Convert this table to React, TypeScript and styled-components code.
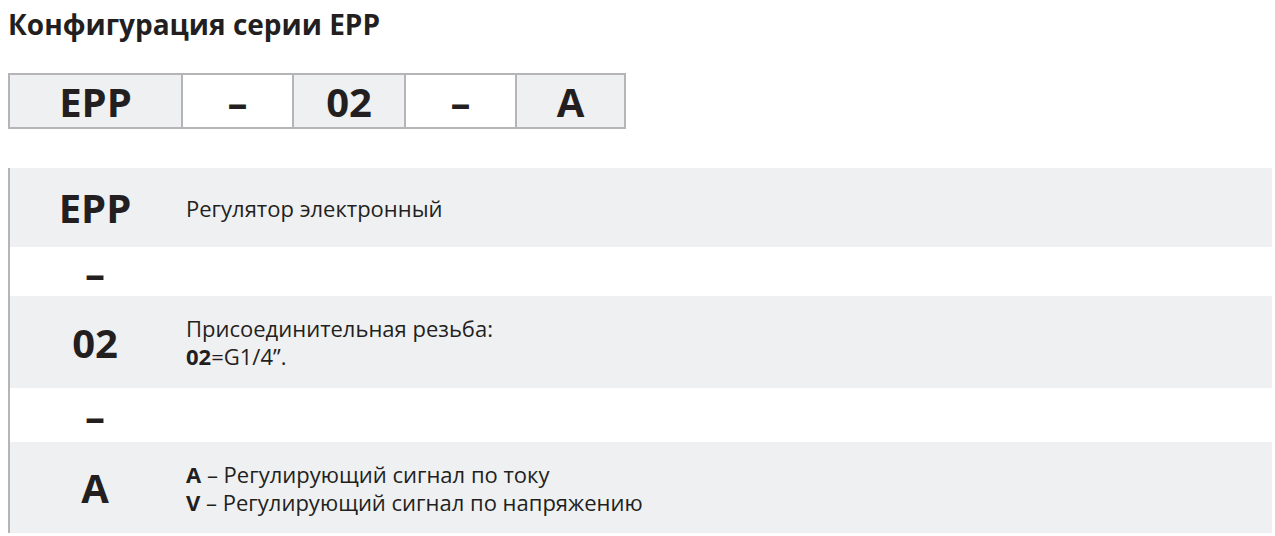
import React from "react";
import styled, { createGlobalStyle } from "styled-components";

const GlobalStyle = createGlobalStyle`
  html, body {
    margin: 0;
    padding: 0;
    background: #ffffff;
  }
  body {
    font-family: "Open Sans", "Noto Sans", "Liberation Sans", sans-serif;
    color: #231f20;
  }
`;

const Page = styled.div`
  padding: 5px 3px 0 8px;
`;

const Title = styled.h1`
  margin: 0;
  font-size: 28px;
  line-height: 38px;
  font-weight: 700;
`;

// верхняя строка с кодом заказа
const CodeStrip = styled.div`
  display: flex;
  width: 618px;
  height: 56px;
  margin-top: 30px;
  border: 2px solid #b5b5b7;
  box-sizing: border-box;
`;

const CodeCell = styled.div<{ $w?: number; $shaded?: boolean }>`
  box-sizing: border-box;
  display: flex;
  align-items: center;
  justify-content: center;
  width: ${(p) => p.$w ?? 111}px;
  background: ${(p) => (p.$shaded ? "#eff0f2" : "#ffffff")};
  border-right: 2px solid #b5b5b7;
  font-size: 40px;
  font-weight: 700;

  &:last-child {
    border-right: none;
    flex: 1;
  }
`;

// таблица расшифровки
const Legend = styled.div`
  display: flex;
  flex-direction: column;
  margin-top: 39px;
  border-left: 2px solid #b5b5b7;
`;

const LegendRow = styled.div<{ $h: number; $shaded?: boolean }>`
  display: flex;
  align-items: center;
  height: ${(p) => p.$h}px;
  background: ${(p) => (p.$shaded ? "#eff0f2" : "#ffffff")};
`;

const Code = styled.div`
  width: 170px;
  flex-shrink: 0;
  text-align: center;
  font-size: 40px;
  font-weight: 700;
`;

const Dash = styled(Code)`
  line-height: 40px;
  padding-top: 2px;
`;

const Desc = styled.div`
  padding-left: 6px;
  font-size: 22px;
  line-height: 28px;

  b {
    font-weight: 700;
  }
`;

const App: React.FC = () => {
  return (
    <Page>
      <GlobalStyle />
      <Title>Конфигурация серии EPP</Title>

      <CodeStrip>
        <CodeCell $w={173} $shaded>EPP</CodeCell>
        <CodeCell>–</CodeCell>
        <CodeCell $w={112} $shaded>02</CodeCell>
        <CodeCell>–</CodeCell>
        <CodeCell $shaded>A</CodeCell>
      </CodeStrip>

      <Legend>
        <LegendRow $h={79} $shaded>
          <Code>EPP</Code>
          <Desc>Регулятор электронный</Desc>
        </LegendRow>
        <LegendRow $h={49}>
          <Dash>–</Dash>
        </LegendRow>
        <LegendRow $h={92} $shaded>
          <Code>02</Code>
          <Desc>
            Присоединительная резьба:
            <br />
            <b>02</b>=G1/4”.
          </Desc>
        </LegendRow>
        <LegendRow $h={54}>
          <Dash>–</Dash>
        </LegendRow>
        <LegendRow $h={91} $shaded>
          <Code>A</Code>
          <Desc>
            <b>A</b> – Регулирующий сигнал по току
            <br />
            <b>V</b> – Регулирующий сигнал по напряжению
          </Desc>
        </LegendRow>
      </Legend>
    </Page>
  );
};

export default App;
